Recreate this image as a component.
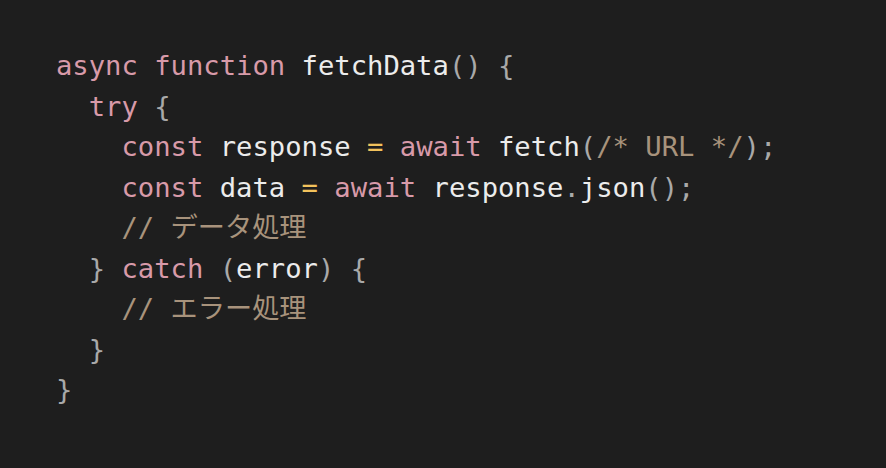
import React from "react";

const K = ({ children }: { children: React.ReactNode }) => <span className="text-[#d89aa9]">{children}</span>;
const I = ({ children }: { children: React.ReactNode }) => <span className="text-[#ececec]">{children}</span>;
const P = ({ children }: { children: React.ReactNode }) => <span className="text-[#a9a9a9]">{children}</span>;
const C = ({ children }: { children: React.ReactNode }) => <span className="text-[#a8937c]">{children}</span>;
const Y = ({ children }: { children: React.ReactNode }) => <span className="text-[#f2c25c]">{children}</span>;

export default function App() {
  return (
    <div className="w-[886px] h-[468px] bg-[#1e1e1e] overflow-hidden">
      <pre
        className="pt-[46px] pl-[56px] text-[27.2px] leading-[40.5px] whitespace-pre"
        style={{ fontFamily: '"DejaVu Sans Mono", "Noto Sans CJK JP", monospace' }}
      >
        <div><K>async</K> <K>function</K> <I>fetchData</I><P>()</P> <P>{"{"}</P></div>
        <div>  <K>try</K> <P>{"{"}</P></div>
        <div>    <K>const</K> <I>response</I> <Y>=</Y> <K>await</K> <I>fetch</I><P>(</P><C>/* URL */</C><P>);</P></div>
        <div>    <K>const</K> <I>data</I> <Y>=</Y> <K>await</K> <I>response</I><P>.</P><I>json</I><P>();</P></div>
        <div>    <C>// データ処理</C></div>
        <div>  <P>{"}"}</P> <K>catch</K> <P>(</P><I>error</I><P>)</P> <P>{"{"}</P></div>
        <div>    <C>// エラー処理</C></div>
        <div>  <P>{"}"}</P></div>
        <div><P>{"}"}</P></div>
      </pre>
    </div>
  );
}
